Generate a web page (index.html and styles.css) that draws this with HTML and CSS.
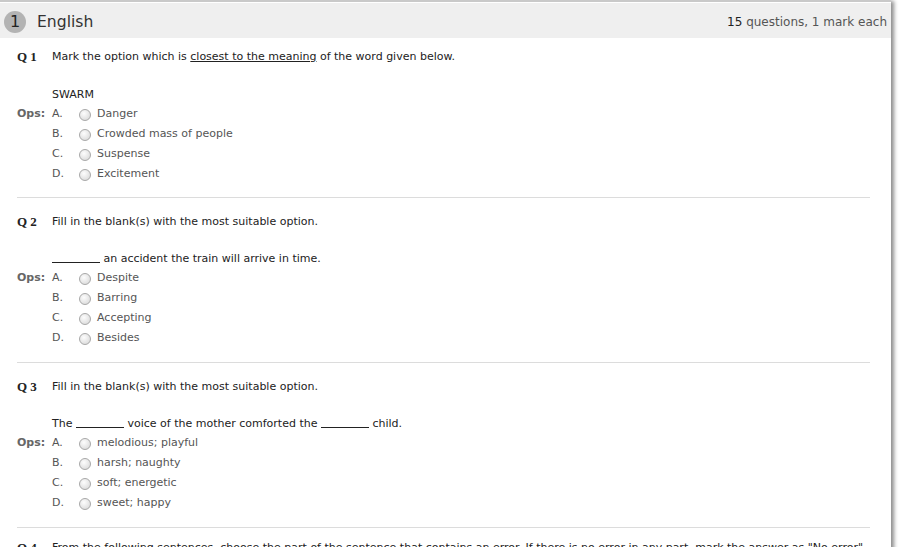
FILE: index.html
```html
<!DOCTYPE html>
<html>
<head>
<meta charset="utf-8">
<link rel="stylesheet" href="styles.css">
</head>
<body>
<div class="section">
  <div class="sec-head">
    <div class="sec-title"><span class="badge">1</span><span class="sec-name">English</span></div>
    <div class="sec-info"><span class="count">15</span> questions, 1 mark each</div>
  </div>

  <div class="question first">
    <div class="q-line"><span class="qnum">Q 1</span><span class="q-text">Mark the option which is <u>closest to the meaning</u> of the word given below.</span></div>
    <div class="stem">SWARM</div>
    <div class="ops">
      <span class="ops-label">Ops:</span><span class="letter">A.</span><span class="radio"></span><span class="opt">Danger</span>
      <span></span><span class="letter">B.</span><span class="radio"></span><span class="opt">Crowded mass of people</span>
      <span></span><span class="letter">C.</span><span class="radio"></span><span class="opt">Suspense</span>
      <span></span><span class="letter">D.</span><span class="radio"></span><span class="opt">Excitement</span>
    </div>
  </div>

  <div class="question">
    <div class="q-line"><span class="qnum">Q 2</span><span class="q-text">Fill in the blank(s) with the most suitable option.</span></div>
    <div class="stem"><span class="blank"></span> an accident the train will arrive in time.</div>
    <div class="ops">
      <span class="ops-label">Ops:</span><span class="letter">A.</span><span class="radio"></span><span class="opt">Despite</span>
      <span></span><span class="letter">B.</span><span class="radio"></span><span class="opt">Barring</span>
      <span></span><span class="letter">C.</span><span class="radio"></span><span class="opt">Accepting</span>
      <span></span><span class="letter">D.</span><span class="radio"></span><span class="opt">Besides</span>
    </div>
  </div>

  <div class="question">
    <div class="q-line"><span class="qnum">Q 3</span><span class="q-text">Fill in the blank(s) with the most suitable option.</span></div>
    <div class="stem">The <span class="blank"></span> voice of the mother comforted the <span class="blank"></span> child.</div>
    <div class="ops">
      <span class="ops-label">Ops:</span><span class="letter">A.</span><span class="radio"></span><span class="opt">melodious; playful</span>
      <span></span><span class="letter">B.</span><span class="radio"></span><span class="opt">harsh; naughty</span>
      <span></span><span class="letter">C.</span><span class="radio"></span><span class="opt">soft; energetic</span>
      <span></span><span class="letter">D.</span><span class="radio"></span><span class="opt">sweet; happy</span>
    </div>
  </div>

  <div class="question last">
    <div class="q-line"><span class="qnum">Q 4</span><span class="q-text">From the following sentences, choose the part of the sentence that contains an error. If there is no error in any part, mark the answer as "No error".</span></div>
  </div>
</div>
</body>
</html>
```

FILE: styles.css
```css
html, body {
  margin: 0;
  padding: 0;
  background: #fff;
  overflow: hidden;
}
body {
  font-family: "DejaVu Sans", Verdana, sans-serif;
  font-size: 11px;
  color: #333;
}
.section {
  width: 891px;
  border-top: 2px solid #c9c9c9;
  box-shadow: 3px 1px 4px rgba(0,0,0,0.45);
  background: #fff;
  height: 560px;
}
.sec-head {
  display: flex;
  justify-content: space-between;
  align-items: center;
  height: 35px;
  margin-top: 1px;
  background: #efefef;
  padding: 2px 4px 0 4px;
  box-sizing: border-box;
}
.sec-title {
  display: flex;
  align-items: center;
}
.badge {
  width: 22px;
  height: 22px;
  border-radius: 50%;
  background: #b3b3b3;
  color: #222;
  font-size: 16px;
  line-height: 22px;
  text-align: center;
}
.sec-name {
  margin-left: 11px;
  font-size: 15.6px;
  color: #333;
}
.sec-info {
  font-size: 12px;
  color: #555;
}
.count {
  color: #222;
}
.question {
  margin: 0 21px 0 17px;
  padding: 13px 0 15px;
  border-bottom: 1px solid #dcdcdc;
}
.question.first {
  padding-top: 8px;
  padding-bottom: 14px;
}
.question.first .stem {
  margin-top: 18px;
}
.question.last {
  padding-top: 9px;
  border-bottom: none;
}
.q-line {
  display: flex;
  height: 20px;
  line-height: 21px;
  white-space: nowrap;
}
.qnum {
  width: 35px;
  flex: none;
  font-family: "Liberation Serif", "Times New Roman", serif;
  font-weight: bold;
  font-size: 13px;
  color: #222;
}
.q-text {
  color: #222;
}
.stem {
  margin-top: 17px;
  margin-left: 35px;
  height: 19px;
  line-height: 21px;
  color: #222;
  white-space: nowrap;
}
.blank {
  display: inline-block;
  width: 48px;
  height: 1px;
  border-bottom: 1px solid #222;
  vertical-align: -1px;
}
.ops {
  display: grid;
  grid-template-columns: 35px 28px 17px 1fr;
  grid-auto-rows: 20px;
  align-items: center;
  color: #555;
}
.ops-label {
  font-weight: bold;
  color: #666;
}
.radio {
  width: 12px;
  height: 12px;
  box-sizing: border-box;
  border-radius: 50%;
  border: 1px solid #a8a8a8;
  background: radial-gradient(circle at 40% 35%, #fdfdfd, #d4d4d4);
  margin-top: 3px;
  margin-left: -1px;
}
.opt {
  color: #555;
}
```
